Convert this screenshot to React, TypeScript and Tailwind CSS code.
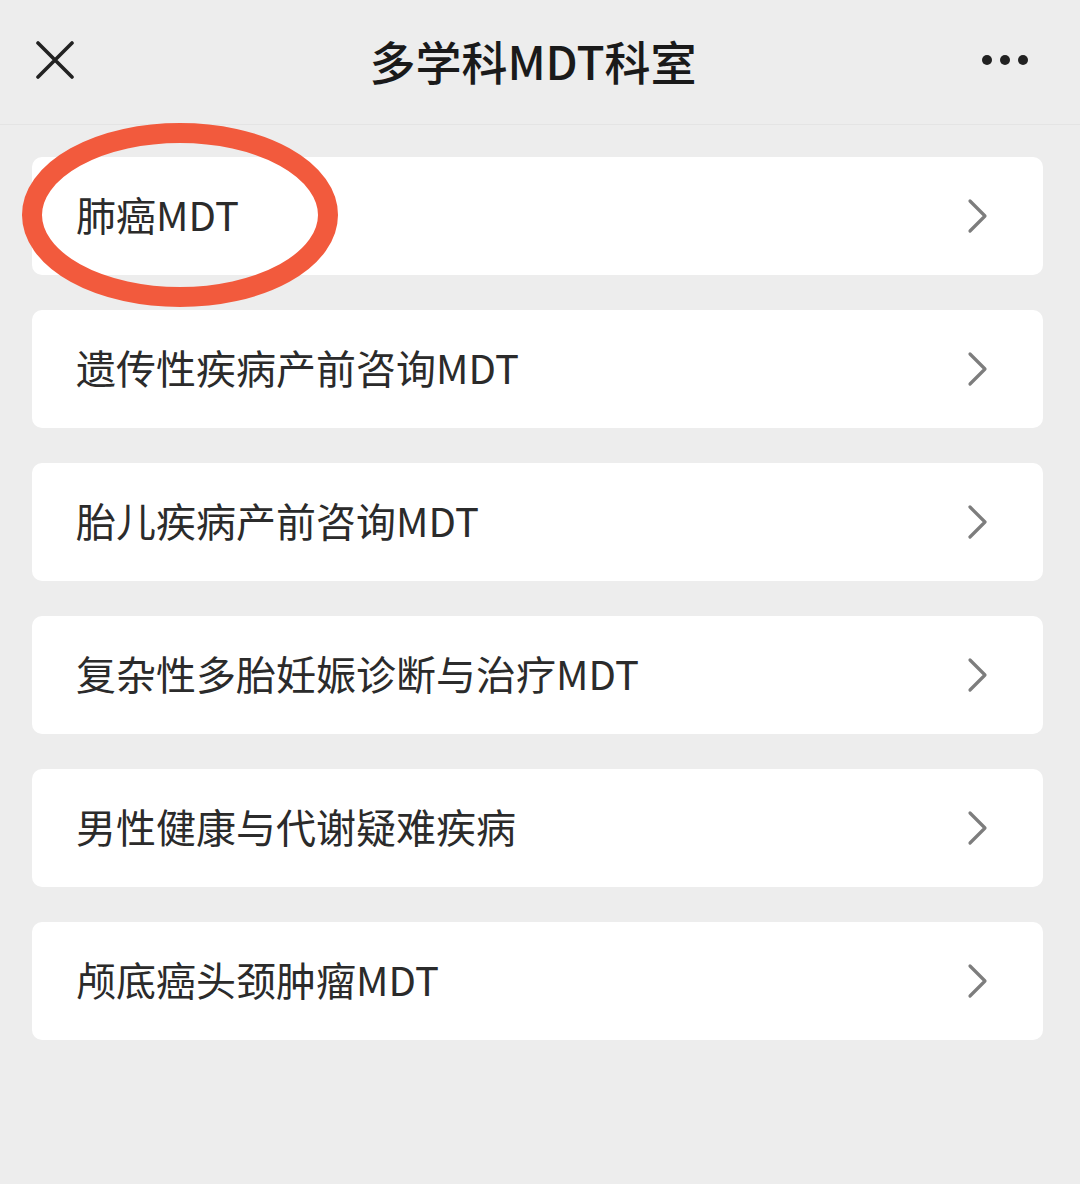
import React from 'react';

const items = [
  '肺癌MDT',
  '遗传性疾病产前咨询MDT',
  '胎儿疾病产前咨询MDT',
  '复杂性多胎妊娠诊断与治疗MDT',
  '男性健康与代谢疑难疾病',
  '颅底癌头颈肿瘤MDT',
];

const Chevron = () => (
  <svg width="22" height="36" viewBox="0 0 22 36" fill="none">
    <path d="M3 3 L18 18 L3 33" stroke="#7d7d7d" strokeWidth="3.2" strokeLinecap="round" strokeLinejoin="round" />
  </svg>
);

export default function App() {
  return (
    <div
      className="relative w-[1080px] h-[1184px] bg-[#ededed] overflow-hidden"
      style={{ fontFamily: '"Noto Sans CJK SC", "Noto Sans", sans-serif' }}
    >
      <header className="relative h-[125px] flex items-center justify-between px-[36px] border-b border-[#e4e4e4]">
        <svg width="38" height="38" viewBox="0 0 38 38" className="-mt-[4px]">
          <path d="M2 2 L36 36 M36 2 L2 36" stroke="#222" strokeWidth="3.6" strokeLinecap="round" />
        </svg>
        <h1 className="absolute left-0 right-0 pr-[14px] text-center text-[46px] font-medium text-[#1a1a1a] -mt-[4px] pointer-events-none">
          多学科MDT科室
        </h1>
        <div className="flex gap-[8px] mr-[16px] -mt-[4px]">
          <span className="w-[10px] h-[10px] rounded-full bg-[#222]" />
          <span className="w-[10px] h-[10px] rounded-full bg-[#222]" />
          <span className="w-[10px] h-[10px] rounded-full bg-[#222]" />
        </div>
      </header>

      <div className="flex flex-col gap-[35px] px-[32px] pt-[32px] w-[1075px]">
        {items.map((t) => (
          <div
            key={t}
            className="h-[118px] bg-white rounded-[10px] flex items-center justify-between pl-[44px] pr-[54px]"
          >
            <span className="text-[40px] text-[#2b2b2b] leading-none -mt-[5px]">{t}</span>
            <Chevron />
          </div>
        ))}
      </div>

      <svg className="absolute left-0 top-0 pointer-events-none" width="360" height="330">
        <ellipse cx="180" cy="215" rx="148" ry="82" fill="none" stroke="#f25a3d" strokeWidth="20" />
      </svg>
    </div>
  );
}
